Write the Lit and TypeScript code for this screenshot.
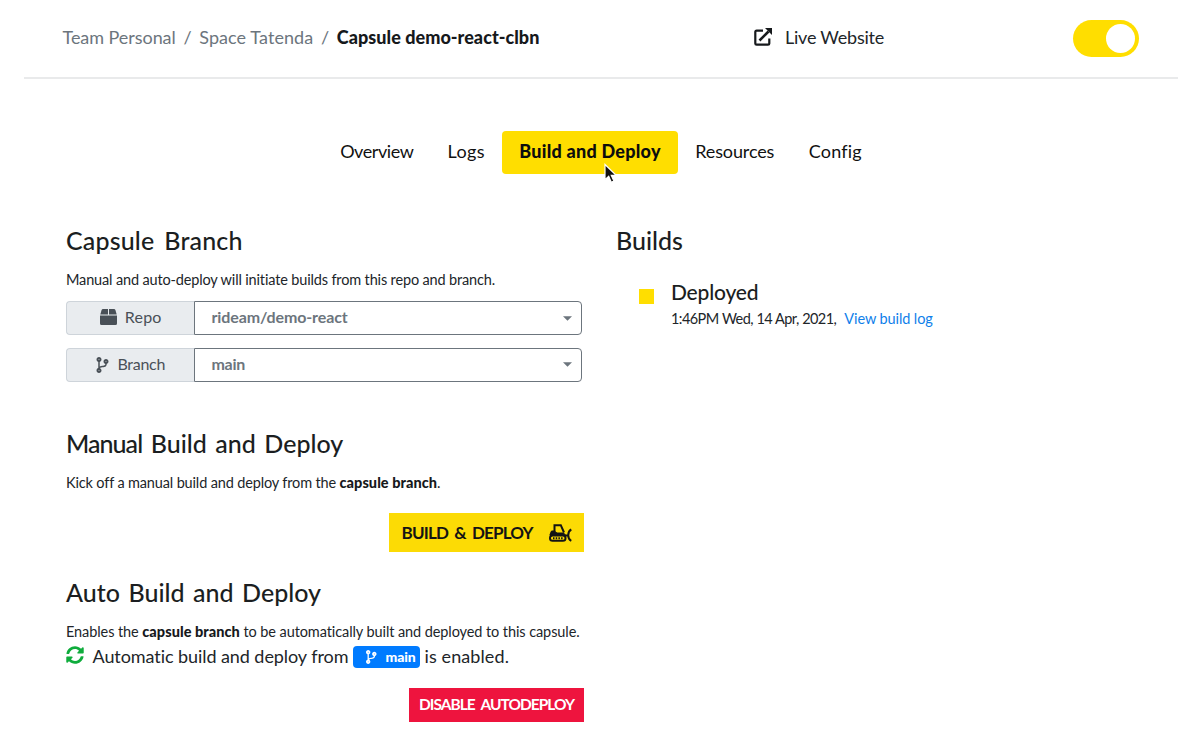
import { LitElement, html, css } from "lit";
import { customElement } from "lit/decorators.js";

const branchIcon = (cls: string) => html`<svg class=${cls} viewBox="0 0 384 512" fill="currentColor"><path d="M384 144c0-44.200-35.800-80-80-80s-80 35.800-80 80c0 36.400 24.300 67.100 57.500 76.800-.6 16.100-4.200 28.500-11 36.900-15.400 19.200-49.300 22.400-85.200 25.700-28.200 2.600-57.400 5.400-81.300 16.900v-144c32.500-10.200 56-40.500 56-76.300 0-44.200-35.800-80-80-80S0 35.800 0 80c0 35.800 23.500 66.100 56 76.300v199.300C23.500 365.900 0 396.200 0 432c0 44.200 35.800 80 80 80s80-35.800 80-80c0-34-21.200-63.100-51.200-74.600 3.100-5.200 7.800-9.800 14.900-13.400 16.200-8.200 40.400-10.400 66.100-12.800 42.200-3.900 90-8.400 118.200-43.400 14-17.400 21.100-39.800 21.600-67.900 31.600-10.800 54.400-40.700 54.400-75.900zM80 64c8.800 0 16 7.200 16 16s-7.200 16-16 16-16-7.200-16-16 7.200-16 16-16zm0 384c-8.800 0-16-7.200-16-16s7.200-16 16-16 16 7.200 16 16-7.200 16-16 16zm224-320c8.800 0 16 7.200 16 16s-7.200 16-16 16-16-7.200-16-16 7.200-16 16-16z"/></svg>`;

const caret = html`<svg class="caret" viewBox="0 0 10 5" fill="currentColor"><path d="M0 0h10L5 5z"/></svg>`;

@customElement("app-root")
export class AppRoot extends LitElement {
  static styles = css`
    :host { display: block; position: relative; width: 1200px; height: 747px; overflow: hidden; background: #fff; color: #212529; font-family: Lato, sans-serif; }
    * { box-sizing: border-box; }
    span, a, b { white-space: nowrap; }
    a { color: inherit; text-decoration: none; }
    b { font-weight: 900; color: #16191c; }
    svg { display: block; flex: none; }
    header { display: flex; height: 79px; margin: 0 22px 0 24px; padding: 0 0 0 38.500px; border-bottom: 2px solid #e9eaeb; font-size: 18px; line-height: 24px; }
    .crumbs { display: flex; gap: 7.700px; width: 691px; padding-top: 25px; color: #6c757d; }
    .crumbs a { letter-spacing: -0.050px; }
    .crumbs .space { letter-spacing: 0.080px; }
    .crumbs b { letter-spacing: 0.040px; }
    .live { display: flex; gap: 13px; width: 319.500px; padding-top: 25px; letter-spacing: -0.220px; }
    .ext { width: 18px; height: 18px; margin: 3px 0 0 0.500px; }
    .toggle { display: flex; justify-content: flex-end; width: 65.500px; height: 37px; margin-top: 19.500px; padding: 4px; border-radius: 19px; background: #ffde00; }
    .knob { width: 29px; height: 29px; border-radius: 50%; background: #fff; }

    nav { display: flex; justify-content: center; height: 43px; margin-top: 52px; padding-left: 2px; font-size: 18px; line-height: 40px; color: #111; text-align: center; }
    nav a { border-radius: 4px; }
    .overview { width: 107.500px; letter-spacing: -0.430px; }
    .logs { width: 71.500px; letter-spacing: 0.400px; }
    .build { width: 176px; background: #ffde00; color: #0d0d0d; font-weight: 900; letter-spacing: 0.250px; }
    .resources { width: 113.500px; letter-spacing: -0.130px; }
    .config { width: 87.500px; letter-spacing: 0.150px; }
    .cursor { position: absolute; left: 602.500px; top: 163px; width: 14px; height: 21px; }

    main { display: grid; grid-template-columns: 518px 1fr; column-gap: 32px; padding: 51px 0 0 66px; }
    h2 { margin: 0; height: 43px; font-size: 25px; line-height: 30px; font-weight: 500; color: #1b1e21; word-spacing: 2.200px; }
    .h-branch { letter-spacing: 0.150px; word-spacing: 3.500px; }
    .h-manual span { letter-spacing: -0.950px; }
    p { margin: 0; font-size: 14.500px; line-height: 24px; height: 33px; white-space: nowrap; }
    .p-branch { letter-spacing: -0.150px; }
    .p-manual { letter-spacing: -0.150px; height: 42px; }
    .p-manual b { letter-spacing: 0.050px; }
    .p-auto { letter-spacing: -0.090px; height: 22px; }
    .p-auto b { letter-spacing: 0.060px; }

    .group { display: flex; width: 516px; height: 34px; margin: 0 0 12.500px; }
    .label { display: flex; justify-content: center; gap: 8px; width: 127.500px; border: 1px solid #ced4da; border-right: 0; border-radius: 4px 0 0 4px; background: #e9ecef; color: #495057; font-size: 16px; line-height: 29px; letter-spacing: 0.200px; }
    .label.narrow { letter-spacing: -0.280px; }
    .box { width: 17px; height: 16px; margin: 7px 0 0 1px; }
    .fork { width: 13px; height: 16px; margin: 8px 0 0 1px; }
    .select { display: flex; align-items: center; justify-content: space-between; flex: 1; padding: 0 9px 0 17px; border: 1px solid #6c757d; border-radius: 0 4px 4px 0; color: #6c757d; font-size: 16px; font-weight: 700; line-height: 30px; letter-spacing: -0.120px; }
    .select .short { letter-spacing: -0.280px; }
    .select span { padding-bottom: 2px; }
    .caret { width: 9px; height: 5px; }

    .sec-branch { height: 203px; }
    .sec-manual { height: 149px; }
    .actions { display: flex; justify-content: flex-end; }
    .go { display: flex; align-items: center; width: 195.500px; height: 39px; padding: 0 12px 0 13px; background: #fcdb05; color: #141414; font-size: 17px; font-weight: 700; line-height: 37px; letter-spacing: -0.800px; word-spacing: 2.800px; }
    .go span { flex: 1; padding-bottom: 1px; }
    .dozer { width: 23px; height: 18px; }
    .stop { width: 175px; height: 34px; background: #ee143e; color: #fff; font-size: 15.500px; font-weight: 700; line-height: 33px; letter-spacing: -0.980px; word-spacing: 3.500px; text-align: center; }

    .status { display: flex; align-items: center; height: 28px; margin-bottom: 18px; font-size: 18px; line-height: 28px; }
    .sync { width: 18px; height: 18px; margin: 0 8.500px 2px 0; color: #0fac3c; }
    .auto-text { width: 260.500px; letter-spacing: -0.070px; padding-bottom: 1px; }
    .badge { display: flex; align-items: center; gap: 9px; width: 67px; height: 22px; margin: 2px 4.500px 0 0; padding-left: 13px; border-radius: 4px; background: #007bff; color: #fff; font-size: 14px; font-weight: 900; line-height: 20px; letter-spacing: -0.100px; }
    .mini { width: 10.500px; height: 14px; }
    .enabled { letter-spacing: 0.100px; padding-bottom: 1px; }

    .entry { display: flex; padding: 9px 0 0 23px; }
    .dot { width: 15px; height: 15px; margin: 12px 17px 0 0; background: #ffde00; }
    h3 { margin: 0; font-size: 21px; line-height: 29px; font-weight: 500; color: #1b1e21; letter-spacing: -0.200px; }
    .when { display: flex; gap: 8px; margin-top: 2px; font-size: 14.500px; line-height: 22px; }
    .when .time { letter-spacing: -0.560px; word-spacing: 0.300px; }
    .when a { color: #0f80ea; letter-spacing: -0.100px; }
  `;

  render() {
    return html`
      <header>
        <div class="crumbs">
          <a>Team Personal</a><span>/</span><a class="space">Space Tatenda</a><span>/</span><b>Capsule demo-react-clbn</b>
        </div>
        <a class="live">
          <svg class="ext" viewBox="0 0 18 18" fill="none" stroke="#16191c" stroke-width="2.200"><path d="M9 2.600H2.600Q1.300 2.600 1.300 3.900V15.400Q1.300 16.700 2.600 16.700H14Q15.300 16.700 15.300 15.400V10.500"/><path d="M5.500 12.500 14.500 3.500" stroke-width="2.600"/><path d="M11 0H18v7z" fill="#16191c" stroke="none"/></svg>
          <span>Live Website</span>
        </a>
        <div class="toggle"><div class="knob"></div></div>
      </header>
      <nav>
        <a class="overview">Overview</a><a class="logs">Logs</a><a class="build">Build and Deploy</a><a class="resources">Resources</a><a class="config">Config</a>
      </nav>
      <svg class="cursor" viewBox="0 0 14 21"><path d="M2 1.500v15.200l3.700-3.400 2.600 6 2.600-1.200-2.600-5.700h4.900z" fill="#111" stroke="#fff" stroke-width="1.200"/></svg>
      <main>
        <div>
          <section class="sec-branch">
            <h2 class="h-branch">Capsule Branch</h2>
            <p class="p-branch">Manual and auto-deploy will initiate builds from this repo and branch.</p>
            <div class="group">
              <div class="label"><svg class="box" viewBox="0 0 17 16" fill="currentColor"><path d="M3 0h5v5.500H.3L1.600 1Q2 0 3 0zM9 0h5q1 0 1.400 1l1.300 4.500H9zM0 6.500h17V14.500Q17 16 15.500 16H1.500Q0 16 0 14.500z"/></svg><span>Repo</span></div>
              <div class="select"><span>rideam/demo-react</span>${caret}</div>
            </div>
            <div class="group">
              <div class="label narrow">${branchIcon("fork")}<span>Branch</span></div>
              <div class="select"><span class="short">main</span>${caret}</div>
            </div>
          </section>
          <section class="sec-manual">
            <h2 class="h-manual"><span>Manual</span> Build and Deploy</h2>
            <p class="p-manual">Kick off a manual build and deploy from the <b>capsule branch</b>.</p>
            <div class="actions">
              <a class="go"><span>BUILD &amp; DEPLOY</span>
                <svg class="dozer" viewBox="0 0 23 18" fill="none" stroke="#141414" stroke-width="2"><path d="M5.500 9V1.200h6.300L15 8.500"/><path d="M1 10.500 2.500 7H5l3 2h6.500l1.500 1.500v1H1z" fill="#141414" stroke-width="1"/><rect x="1" y="11.500" width="15.500" height="5.300" rx="2.600"/><path d="M4 14.200h10" stroke-dasharray="1.500 1.200"/><path d="M16 11.500h3M22.300 5.500C18.200 7.500 18.200 15 22.300 16.800"/></svg>
              </a>
            </div>
          </section>
          <section>
            <h2>Auto Build and Deploy</h2>
            <p class="p-auto">Enables the <b>capsule branch</b> to be automatically built and deployed to this capsule.</p>
            <div class="status">
              <svg class="sync" viewBox="0 0 512 512" fill="currentColor"><path d="M370.700 133.300C339.500 104 298.900 88 255.800 88c-77.500.1-144.300 53.200-162.800 126.900-1.300 5.400-6.100 9.200-11.700 9.200H24.100c-7.500 0-13.200-6.800-11.800-14.200C33.900 94.900 134.800 8 256 8c66.400 0 126.800 26.100 171.300 68.700L463 41c15.100-15.100 41-4.400 41 17v134c0 13.300-10.700 24-24 24H346c-21.400 0-32.100-25.900-17-41zM32 296h134c21.400 0 32.100 25.900 17 41l-41.800 41.800c31.300 29.300 71.800 45.300 114.900 45.300 77.400-.1 144.300-53.100 162.800-126.800 1.300-5.400 6.100-9.200 11.700-9.200h57.300c7.500 0 13.200 6.800 11.800 14.200C478.100 417.100 377.200 504 256 504c-66.400 0-126.800-26.100-171.300-68.700L49 471c-15.100 15.100-41 4.400-41-17V320c0-13.300 10.700-24 24-24z"/></svg>
              <span class="auto-text">Automatic build and deploy from</span>
              <span class="badge">${branchIcon("mini")}<span>main</span></span>
              <span class="enabled">is enabled.</span>
            </div>
            <div class="actions"><a class="stop">DISABLE AUTODEPLOY</a></div>
          </section>
        </div>
        <section>
          <h2>Builds</h2>
          <div class="entry">
            <div class="dot"></div>
            <div>
              <h3>Deployed</h3>
              <div class="when"><span class="time">1:46PM Wed, 14 Apr, 2021,</span><a>View build log</a></div>
            </div>
          </div>
        </section>
      </main>
    `;
  }
}
